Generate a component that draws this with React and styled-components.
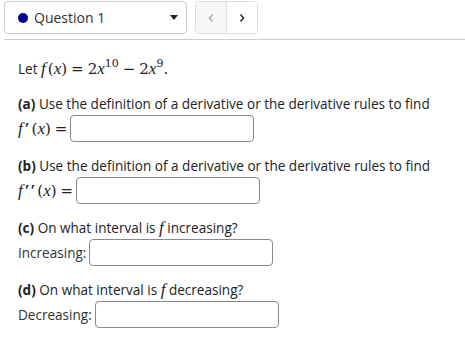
import React from "react";
import styled, { createGlobalStyle } from "styled-components";

const Global = createGlobalStyle`
  html, body { margin: 0; padding: 0; background: #fff; }
  body { font-family: "Open Sans", "Liberation Sans", sans-serif; color: #222; }
`;

const Page = styled.div`
  width: 465px;
  padding: 1px 0 0 4px;
  box-sizing: border-box;
`;

const Toolbar = styled.div`
  display: flex;
  align-items: center;
  gap: 8px;
  height: 33px;
`;

const Select = styled.div`
  width: 183px;
  height: 33px;
  box-sizing: border-box;
  border: 1px solid #ccc;
  border-radius: 4px;
  display: flex;
  align-items: center;
  padding: 0 8px 0 13px;
  font-size: 14px;
  color: #333;
`;

const Dot = styled.span`
  width: 10px;
  height: 10px;
  border-radius: 50%;
  background: #00008b;
  margin-right: 6px;
  flex: none;
`;

const SelectLabel = styled.span`
  flex: 1;
`;

const Caret = styled.span`
  width: 0;
  height: 0;
  border-left: 4px solid transparent;
  border-right: 4px solid transparent;
  border-top: 5px solid #222;
`;

const NavGroup = styled.div`
  display: flex;
  border: 1px solid #ddd;
  border-radius: 4px;
  overflow: hidden;
  height: 33px;
  box-sizing: border-box;
`;

const NavButton = styled.div`
  width: 30px;
  display: flex;
  align-items: center;
  justify-content: center;
  background: ${(p) => (p.$disabled ? "#f7f7f7" : "#fff")};
  color: ${(p) => (p.$disabled ? "#aaa" : "#222")};
  & + & { border-left: 1px solid #ddd; }
`;

const Divider = styled.div`
  height: 1px;
  background: #ccc;
  margin-top: 5px;
`;

const Content = styled.div`
  padding: 19px 0 0 14px;
  font-size: 13.55px;
  color: #222;
`;

const Para = styled.div`
  line-height: 20px;
  margin-bottom: ${(p) => p.$mb || 0}px;
`;

const Math = styled.span`
  font-family: "DejaVu Serif", "Liberation Serif", serif;
  font-size: 15px;
  white-space: nowrap;
`;

const V = styled.i`
  font-family: "Liberation Serif", serif;
  font-size: 17px;
  margin-right: ${(p) => (p.$f ? 2 : 0)}px;
`;

const Prime = styled.span`
  font-family: "Liberation Serif", serif;
  font-size: 17px;
  font-weight: bold;
  margin-right: 1px;
  letter-spacing: 1px;
`;

const Eq = styled.span`
  margin: 0 ${(p) => (p.$tight ? "0 0 4px" : "4px")};
`;

const Sup = styled.sup`
  font-size: 11px;
  vertical-align: 7px;
  line-height: 0;
`;

const AnswerRow = styled.div`
  display: flex;
  align-items: center;
  gap: 3px;
  margin: 1px 0 ${(p) => p.$mb || 0}px;
`;

const Input = styled.div`
  width: 184px;
  height: 27px;
  box-sizing: border-box;
  border: 1px solid #8a8a8a;
  border-radius: 4px;
  background: #fff;
`;

const Label = styled.span`
  color: #333;
`;

const Chevron = ({ dir }) => (
  <svg width="8" height="10" viewBox="0 0 8 10">
    <path
      d={dir === "left" ? "M5.5 1.5 L2.5 5 L5.5 8.5" : "M2.5 1.5 L5.5 5 L2.5 8.5"}
      fill="none"
      stroke="currentColor"
      strokeWidth="1.4"
    />
  </svg>
);

const Fx = ({ primes = "" }) => (
  <Math>
    <V $f>f</V>
    <Prime>{primes}</Prime>(<V>x</V>)<Eq $tight>=</Eq>
  </Math>
);

export default function App() {
  return (
    <Page>
      <Global />
      <Toolbar>
        <Select>
          <Dot />
          <SelectLabel>Question 1</SelectLabel>
          <Caret />
        </Select>
        <NavGroup>
          <NavButton $disabled>
            <Chevron dir="left" />
          </NavButton>
          <NavButton>
            <Chevron dir="right" />
          </NavButton>
        </NavGroup>
      </Toolbar>
      <Divider />
      <Content>
        <Para $mb={15}>
          Let{" "}
          <Math>
            <V $f>f</V>(<V>x</V>)<Eq>=</Eq>2<V>x</V>
            <Sup>10</Sup>
            <Eq>−</Eq>2<V>x</V>
            <Sup>9</Sup>.
          </Math>
        </Para>
        <Para>
          <b>(a)</b> Use the definition of a derivative or the derivative rules to find
        </Para>
        <AnswerRow $mb={14}>
          <Fx primes="′" />
          <Input />
        </AnswerRow>
        <Para>
          <b>(b)</b> Use the definition of a derivative or the derivative rules to find
        </Para>
        <AnswerRow $mb={14}>
          <Fx primes="′′" />
          <Input />
        </AnswerRow>
        <Para>
          <b>(c)</b> On what interval is <V>f</V> increasing?
        </Para>
        <AnswerRow $mb={14}>
          <Label>Increasing:</Label>
          <Input />
        </AnswerRow>
        <Para>
          <b>(d)</b> On what interval is <V>f</V> decreasing?
        </Para>
        <AnswerRow>
          <Label>Decreasing:</Label>
          <Input />
        </AnswerRow>
      </Content>
    </Page>
  );
}
